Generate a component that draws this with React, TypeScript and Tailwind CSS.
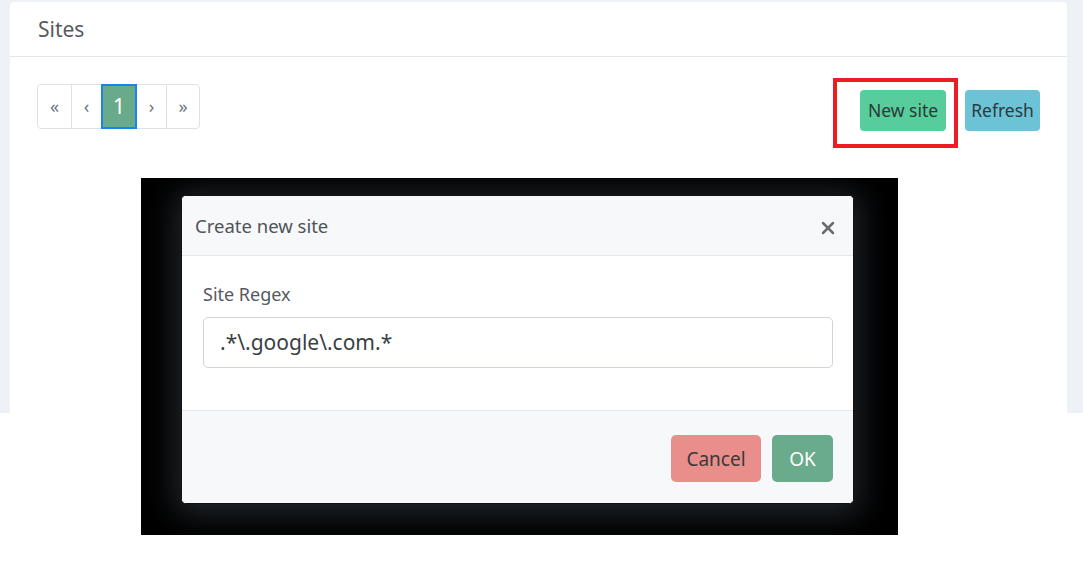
import { X } from 'lucide-react';

const pages = [
  { label: '«', w: 'w-[33px]' },
  { label: '‹', w: 'w-[30px]' },
  { label: '1', w: 'w-[36px]', active: true },
  { label: '›', w: 'w-[29px]' },
  { label: '»', w: 'w-[33px]' },
];

function Pagination() {
  return (
    <div className="flex h-[45px] rounded-[4px] border border-[#dee2e6] bg-white">
      {pages.map((p, i) =>
        p.active ? (
          <div
            key={i}
            className={`${p.w} -my-px flex items-center justify-center border-2 border-[#1a82f0] bg-[#69aa8b] text-[21px] text-white`}
          >
            {p.label}
          </div>
        ) : (
          <div
            key={i}
            className={`${p.w} flex items-center justify-center text-[18px] text-[#6c757d] ${i > 0 && !pages[i - 1].active ? 'border-l border-[#dee2e6]' : ''}`}
          >
            {p.label}
          </div>
        )
      )}
    </div>
  );
}

function SitesCard() {
  return (
    <div className="h-[430px] rounded-t-[4px] bg-white">
      <div className="flex h-[55px] items-center border-b border-[#e3e6ea] pl-[28px] pt-[2px] text-[21px] text-[#555a60]">
        Sites
      </div>
      <div className="flex items-start justify-between pl-[27px] pr-[27px] pt-[27px]">
        <Pagination />
        <div className="mt-[6px] flex items-center gap-[19px]">
          <div className="relative">
            {/* red highlight box around the button */}
            <div className="pointer-events-none absolute left-[-27px] top-[-12px] h-[70px] w-[125px] border-[4px] border-[#ed1c24]" />
            <button className="h-[41px] w-[86px] rounded-[4px] bg-[#57cd9c] text-[17.5px] text-[#2a3a36]">
              New site
            </button>
          </div>
          <button className="h-[41px] w-[75px] rounded-[4px] bg-[#6cc3d6] text-[17.5px] text-[#2a3a40]">
            Refresh
          </button>
        </div>
      </div>
    </div>
  );
}

function ModalShot() {
  return (
    <div className="absolute left-[141px] top-[178px] h-[357px] w-[757px] overflow-hidden bg-black pl-[40px] pt-[17px]">
      <div className="flex h-[309px] w-[673px] flex-col overflow-hidden rounded-[5px] border border-[#111] bg-white shadow-[0_4px_30px_6px_rgba(38,44,50,0.9)]">
        <div className="flex h-[60px] items-center justify-between border-b border-[#e4e6e9] bg-[#f7f8fa] pl-[13px] pr-[15px]">
          <span className="text-[18.5px] text-[#4f5459]">Create new site</span>
          <X className="mt-[4px] h-[20px] w-[20px] text-[#6b6e71]" strokeWidth={3} />
        </div>
        <div className="flex-1 pl-[21px] pr-[20px] pt-[25px]">
          <div className="text-[18px] text-[#555a60]">Site Regex</div>
          <div className="mt-[9px] flex h-[51px] items-center rounded-[5px] border border-[#ced4da] pl-[16px] text-[21px] text-[#3a3f44]">
            .*\.google\.com.*
          </div>
        </div>
        <div className="flex h-[93px] items-center justify-end gap-[11px] border-t border-[#e4e6e9] bg-[#f7f8fa] pr-[20px] pt-[2px]">
          <button className="h-[47px] w-[90px] rounded-[5px] bg-[#e98e8a] pt-[3px] text-[19px] text-[#3a3a3a]">
            Cancel
          </button>
          <button className="h-[47px] w-[61px] rounded-[5px] bg-[#69ab8b] pt-[3px] text-[19px] text-white">
            OK
          </button>
        </div>
      </div>
    </div>
  );
}

export default function App() {
  return (
    <div className="relative h-[581px] w-[1083px] overflow-hidden bg-white font-['Noto_Sans',sans-serif]">
      <div className="h-[413px] overflow-hidden bg-[#eef2f6] pl-[10px] pr-[16px] pt-[2px]">
        <SitesCard />
      </div>
      <ModalShot />
    </div>
  );
}
